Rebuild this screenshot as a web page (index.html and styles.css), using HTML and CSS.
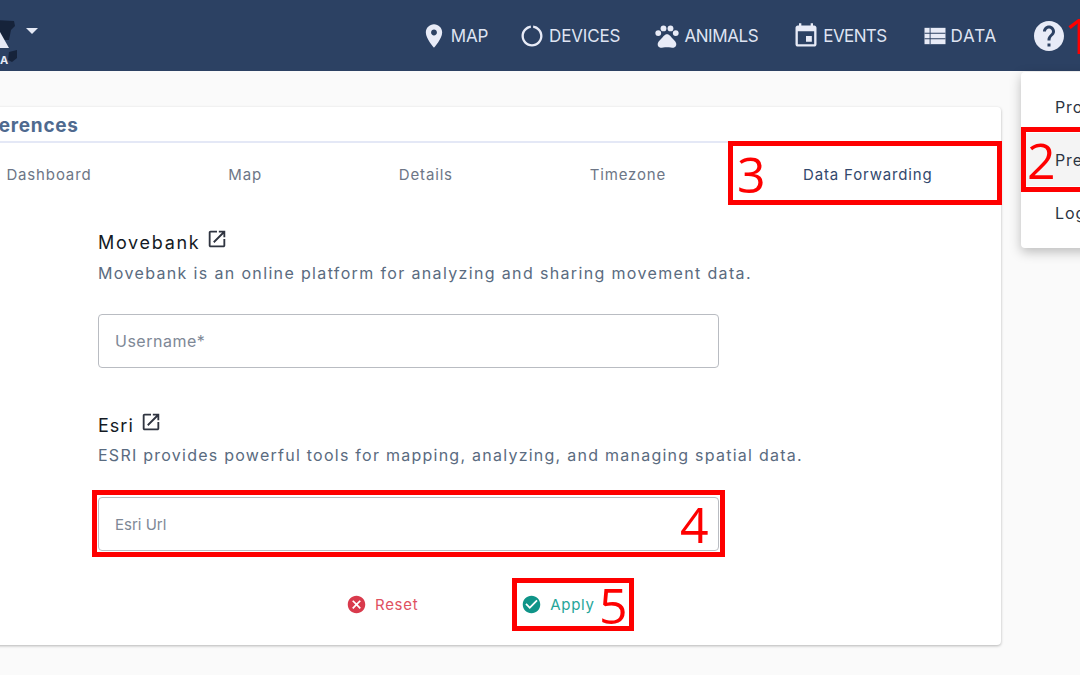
FILE: index.html
```html
<!DOCTYPE html>
<html lang="en">
<head>
<meta charset="utf-8">
<title>Preferences</title>
<link rel="stylesheet" href="styles.css">
</head>
<body>
<div class="page">
  <header class="topbar">
    <div class="brand">
      <svg class="logo" viewBox="0 0 20 50" width="20" height="50">
        <path class="logo-dark" d="M-6 4 L14 5 L15 10 L11 14 L9 24 L5 24 L-6 24 Z"/>
        <path class="logo-light" d="M-6 32 L0 16 L9 32 Z"/>
        <path class="logo-dark" d="M9 36 L17 34 L17 42 L12 46 L8 44 Z"/>
      </svg>
      <span class="logo-text">A</span>
      <span class="caret"></span>
    </div>
    <nav class="nav">
      <a class="nav-item nav-map"><svg class="nav-icon" viewBox="0 0 24 24"><path d="M12 2C8.13 2 5 5.13 5 9c0 5.25 7 13 7 13s7-7.75 7-13c0-3.87-3.13-7-7-7zm0 9.5c-1.38 0-2.5-1.12-2.5-2.5s1.12-2.5 2.5-2.5 2.5 1.12 2.5 2.5-1.12 2.5-2.5 2.5z"/></svg>MAP</a>
      <a class="nav-item nav-devices"><svg class="nav-icon" viewBox="0 0 24 24"><path d="M13 3.05v2.03c3.39.49 6 3.39 6 6.92 0 3.87-3.13 7-7 7s-7-3.13-7-7c0-3.53 2.61-6.43 6-6.92V3.05C6.5 3.55 3 7.36 3 12c0 4.97 4.03 9 9 9s9-4.03 9-9c0-4.64-3.5-8.45-8-8.95z"/></svg>DEVICES</a>
      <a class="nav-item nav-animals"><svg class="nav-icon" viewBox="0 0 24 24"><circle cx="4.5" cy="9.5" r="2.5"/><circle cx="9" cy="5.5" r="2.5"/><circle cx="15" cy="5.5" r="2.5"/><circle cx="19.5" cy="9.5" r="2.5"/><path d="M17.34 14.86c-.87-1.02-1.6-1.89-2.48-2.91-.46-.54-1.05-1.08-1.75-1.32-.11-.04-.22-.07-.33-.09-.25-.04-.52-.04-.78-.04s-.53 0-.79.05c-.11.02-.22.05-.33.09-.7.24-1.28.78-1.75 1.32-.87 1.02-1.6 1.89-2.48 2.91-1.31 1.31-2.92 2.76-2.62 4.79.29 1.02 1.02 2.03 2.33 2.32.73.15 3.06-.44 5.54-.44h.18c2.48 0 4.81.58 5.54.44 1.31-.29 2.04-1.31 2.33-2.32.31-2.04-1.3-3.49-2.61-4.8z"/></svg>ANIMALS</a>
      <a class="nav-item nav-events"><svg class="nav-icon" viewBox="0 0 24 24"><path d="M17 12h-5v5h5v-5zM16 1v2H8V1H6v2H5c-1.11 0-1.99.9-1.99 2L3 19c0 1.1.89 2 2 2h14c1.1 0 2-.9 2-2V5c0-1.1-.9-2-2-2h-1V1h-2zm3 18H5V8h14v11z"/></svg>EVENTS</a>
      <a class="nav-item nav-data"><svg class="nav-icon" viewBox="0 0 24 24"><path d="M3 5h18v14H3z"/><path class="nav-cut" d="M3 9.2h18v.9H3zM3 13.9h18v.9H3zM7.4 5h.8v14h-.8z"/></svg>DATA</a>
      <svg class="help" viewBox="0 0 24 24"><path d="M12 2C6.48 2 2 6.48 2 12s4.48 10 10 10 10-4.48 10-10S17.52 2 12 2zm1 17h-2v-2h2v2zm2.07-7.75l-.9.92C13.45 12.9 13 13.5 13 15h-2v-.5c0-1.1.45-2.1 1.17-2.83l1.24-1.26c.37-.36.59-.86.59-1.41 0-1.1-.9-2-2-2s-2 .9-2 2H8c0-2.21 1.79-4 4-4s4 1.79 4 4c0 .88-.36 1.68-.93 2.25z"/></svg>
    </nav>
  </header>

  <main class="main">
    <section class="card">
      <h1 class="card-title">Preferences</h1>
      <div class="tabs">
        <span class="tab">Dashboard</span>
        <span class="tab">Map</span>
        <span class="tab">Details</span>
        <span class="tab">Timezone</span>
        <span class="tab tab-active">Data Forwarding</span>
      </div>
      <div class="form">
        <div class="block">
          <h2 class="block-title">Movebank <svg class="ext" viewBox="0 0 24 24"><path d="M19 19H5V5h7V3H5c-1.11 0-2 .9-2 2v14c0 1.1.89 2 2 2h14c1.1 0 2-.9 2-2v-7h-2v7zM14 3v2h3.59l-9.83 9.83 1.41 1.41L19 6.41V10h2V3h-7z"/></svg></h2>
          <p class="block-text">Movebank is an online platform for analyzing and sharing movement data.</p>
          <div class="field field-large">Username*</div>
        </div>
        <div class="block block-esri">
          <h2 class="block-title">Esri <svg class="ext" viewBox="0 0 24 24"><path d="M19 19H5V5h7V3H5c-1.11 0-2 .9-2 2v14c0 1.1.89 2 2 2h14c1.1 0 2-.9 2-2v-7h-2v7zM14 3v2h3.59l-9.83 9.83 1.41 1.41L19 6.41V10h2V3h-7z"/></svg></h2>
          <p class="block-text">ESRI provides powerful tools for mapping, analyzing, and managing spatial data.</p>
          <div class="field">Esri Url</div>
        </div>
        <div class="actions">
          <span class="action action-reset"><svg class="action-icon" viewBox="0 0 24 24"><path d="M12 2C6.47 2 2 6.47 2 12s4.47 10 10 10 10-4.47 10-10S17.53 2 12 2zm5 13.59L15.59 17 12 13.41 8.41 17 7 15.59 10.59 12 7 8.41 8.41 7 12 10.59 15.59 7 17 8.41 13.41 12 17 15.59z"/></svg>Reset</span>
          <span class="action action-apply"><svg class="action-icon" viewBox="0 0 24 24"><path d="M12 2C6.48 2 2 6.48 2 12s4.48 10 10 10 10-4.48 10-10S17.52 2 12 2zm-2 15l-5-5 1.41-1.41L10 14.17l7.59-7.59L19 8l-9 9z"/></svg>Apply</span>
        </div>
      </div>
    </section>
  </main>

  <div class="menu">
    <div class="menu-item">Profile</div>
    <div class="menu-item menu-hover">Preferences</div>
    <div class="menu-item">Logout</div>
  </div>

  <div class="mark mark-2"></div>
  <div class="mark mark-3"></div>
  <div class="mark mark-4"></div>
  <div class="mark mark-5"></div>
  <span class="num num-1">1</span>
  <span class="num num-2">2</span>
  <span class="num num-3">3</span>
  <span class="num num-4">4</span>
  <span class="num num-5">5</span>
</div>
</body>
</html>
```
FILE: styles.css
```css
* { box-sizing: border-box; }
html, body { margin: 0; padding: 0; }
body { font-family: Inter, "Open Sans", sans-serif; background: #fafafa; }
.page { position: relative; width: 1080px; height: 675px; overflow: hidden; background: #fafafa; }

.topbar { height: 71px; background: #2c4163; display: flex; align-items: center; justify-content: space-between; }
.brand { position: relative; width: 60px; height: 71px; }
.logo { position: absolute; left: 0; top: 16px; overflow: visible; }
.logo-dark { fill: #16233a; }
.logo-light { fill: #e6eaf6; }
.logo-text { position: absolute; left: 0; top: 53px; font-size: 11px; font-weight: 700; color: #e6eaf6; }
.caret { position: absolute; left: 26px; top: 28px; border-left: 6px solid transparent; border-right: 6px solid transparent; border-top: 6px solid #e6eaf6; }

.nav { display: flex; align-items: center; padding-right: 13px; }
.nav-item { display: flex; align-items: center; gap: 3px; font-size: 17px; color: #dfe4f2; margin-right: 34px; white-space: nowrap; }
.nav-map { margin-right: 30px; letter-spacing: -.2px; }
.nav-devices { margin-right: 33px; letter-spacing: -.15px; }
.nav-animals { letter-spacing: -.4px; }
.nav-events { letter-spacing: -.6px; }
.nav-data { letter-spacing: .8px; margin-right: 34px; gap: 2px; }
.nav-icon { width: 28px; height: 28px; fill: #e8ebf7; }
.nav-cut { fill: #2c4163; }
.help { width: 36px; height: 36px; fill: #e8ebf7; }

.main { padding-top: 36px; }
.card { margin-left: -62px; width: 1063px; height: 538px; background: #fff; border-radius: 4px; box-shadow: 0 1px 3px rgba(0,0,0,.28); }
.card-title { margin: 0; height: 36px; padding: 7px 0 0 20px; font-size: 19px; line-height: 24px; letter-spacing: .7px; font-weight: 700; color: #4f6a8f; border-bottom: 2px solid #e4e8f6; }
.tabs { display: flex; justify-content: space-around; height: 64px; padding-bottom: 2px; align-items: center; font-size: 15px; letter-spacing: .85px; color: #6d7686; }
.tab-active { color: #33496d; }

.form { padding: 23px 0 0 160px; }
.block { width: 621px; margin-bottom: 45px; }
.block-title { display: flex; align-items: center; gap: 6px; margin: 0; height: 24px; font-size: 18px; letter-spacing: 1.7px; font-weight: 400; color: #141a24; }
.ext { width: 22px; height: 22px; fill: #2f3440; margin-top: -6px; }
.block-text { margin: 8px 0 30px; font-size: 16px; line-height: 22px; letter-spacing: 1.35px; color: #5a6b80; white-space: nowrap; }
.block-esri .block-title { letter-spacing: 1px; }
.block-esri .block-text { margin: 7px 0 31px; letter-spacing: 1.25px; }
.field { height: 54px; border: 1px solid #b9bcc2; border-radius: 4px; padding: 0 16px; display: flex; align-items: center; font-size: 15px; color: #7e8896; background: #fff; }
.field-large { font-size: 16px; letter-spacing: .5px; }

.actions { display: flex; margin-top: -4px; }
.action { display: flex; align-items: center; gap: 8px; font-size: 15px; letter-spacing: .7px; height: 24px; }
.action-reset { margin-left: 248px; color: #e0515f; }
.action-apply { margin-left: 103px; color: #26a69a; }
.action-icon { width: 21px; height: 21px; }
.action-reset .action-icon { fill: #d93a4c; }
.action-apply .action-icon { fill: #0f9488; }

.menu { position: absolute; left: 1021px; top: 72px; width: 120px; height: 176px; padding: 8px 0; background: #fff; border-radius: 4px; box-shadow: 0 4px 12px rgba(0,0,0,.25); }
.menu-item { height: 53px; padding-left: 34px; display: flex; align-items: center; font-size: 16px; letter-spacing: .9px; color: #2b3442; }
.menu-hover { background: #f4f4f4; }

.mark { position: absolute; border: 5px solid #fe0000; }
.mark-2 { left: 1021px; top: 127px; width: 90px; height: 65px; }
.mark-3 { left: 728px; top: 141px; width: 274px; height: 64px; }
.mark-4 { left: 92px; top: 490px; width: 633px; height: 67px; }
.mark-5 { left: 512px; top: 578px; width: 122px; height: 53px; }

.num { position: absolute; font-family: "Open Sans", sans-serif; font-size: 50px; line-height: 50px; color: #fe0000; }
.num-1 { left: 1064px; top: 10px; }
.num-2 { left: 1027px; top: 135px; }
.num-3 { left: 737px; top: 149px; }
.num-4 { left: 680px; top: 499px; }
.num-5 { left: 599px; top: 580px; }
```
